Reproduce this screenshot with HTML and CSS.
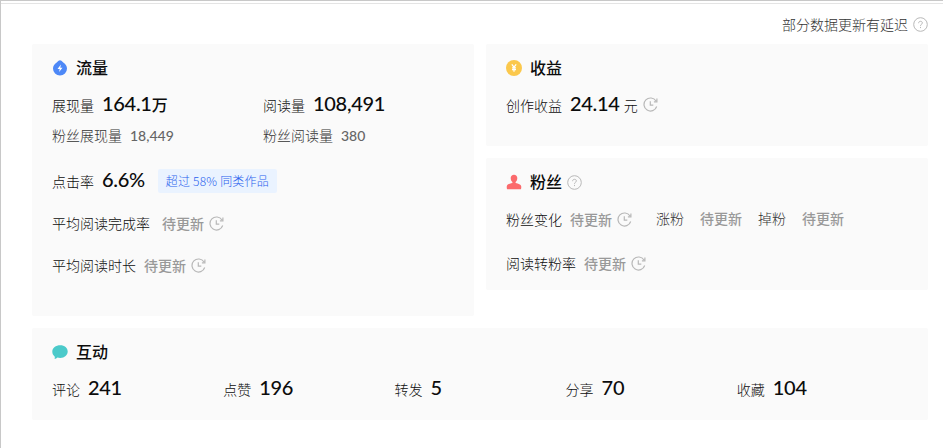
FILE: index.html
```html
<!DOCTYPE html>
<html lang="zh-CN">
<head>
  <meta charset="UTF-8">
  <meta name="viewport" content="width=device-width, initial-scale=1.0">
  <title>数据概览</title>
  <link rel="stylesheet" href="styles.css">
</head>
<body>
  <!-- Shared icons -->
  <svg class="sprite" width="0" height="0">
    <symbol id="help" viewBox="0 0 15 15">
      <circle cx="7.5" cy="7.5" r="6.8" fill="none" stroke="currentColor"/>
      <path d="M5.6 6.2C5.6 5 6.4 4.3 7.500 4.300s1.900.7 1.900 1.700C9.400 7.200 7.500 7.300 7.500 8.800M7.500 9.900v1.200" fill="none" stroke="currentColor"/>
    </symbol>
    <symbol id="clock" viewBox="0 0 15 15">
      <path d="M13 4A6.500 6.500 0 1 0 13.700 9.500M13.900 1.500v3.300h-3M7.300 4.300v3.900h3" fill="none" stroke="currentColor" stroke-width="1.2"/>
    </symbol>
  </svg>

  <div class="page">
    <div class="notice">部分数据更新有延迟<svg class="tip"><use href="#help"/></svg></div>

    <div class="cards">
      <div class="card traffic">
        <h2 class="title">
          <svg class="icon" viewBox="0 0 16 16"><path d="M8 .3C9 .3 9.700 1.200 11.300 2.400 13.600 4.100 15 6 15 8.600a7 7 0 0 1-14 0C1 6 2.400 4.100 4.700 2.400 6.300 1.200 7 .3 8 .3z" fill="#4d88f7"/><path d="M8.900 4.600 5.500 8.900h2.200l-.6 3 3.400-4.200H8.300z" fill="#fff"/></svg>
          <span>流量</span>
        </h2>
        <div class="row pair">
          <div class="item"><span>展现量</span><span class="num">164.1<i class="unit">万</i></span></div>
          <div class="item"><span>阅读量</span><span class="num">108,491</span></div>
        </div>
        <div class="row pair sub">
          <div class="item"><span>粉丝展现量</span><span class="subnum">18,449</span></div>
          <div class="item"><span>粉丝阅读量</span><span class="subnum">380</span></div>
        </div>
        <div class="row rate">
          <div class="item"><span>点击率</span><span class="num">6.6%</span></div>
          <span class="tag">超过 58% 同类作品</span>
        </div>
        <div class="row finish"><span>平均阅读完成率</span><span class="wait">待更新</span><svg class="tip"><use href="#clock"/></svg></div>
        <div class="row duration"><span>平均阅读时长</span><span class="wait">待更新</span><svg class="tip"><use href="#clock"/></svg></div>
      </div>

      <div class="side">
        <div class="card income">
          <h2 class="title">
            <svg class="icon" viewBox="0 0 16 16"><circle cx="8" cy="8" r="8" fill="#fbc84c"/><path d="M5.800 4.300 8 7.200l2.200-2.900M8 7.200v4.600M6 7.800h4M6 9.600h4" fill="none" stroke="#fff" stroke-width="1.2"/></svg>
            <span>收益</span>
          </h2>
          <div class="row money">
            <div class="item"><span>创作收益</span><span class="num">24.14</span><span class="yuan">元</span></div>
            <svg class="tip"><use href="#clock"/></svg>
          </div>
        </div>

        <div class="card fans">
          <h2 class="title">
            <svg class="icon" viewBox="0 0 16 16"><path d="M8 .8c2 0 3.300 1.400 3.300 3.300 0 1.800-.7 3.200-1.700 4v.8c2.800.6 5.300 1.400 5.600 3.300.2 1.200 0 2.500-.4 3.100H1.200c-.4-.6-.6-1.900-.4-3.100.3-1.900 2.800-2.700 5.600-3.300v-.8c-1-.8-1.700-2.200-1.700-4C4.700 2.200 6 .8 8 .8z" fill="#fb6a6c"/></svg>
            <span>粉丝</span><svg class="tip"><use href="#help"/></svg>
          </h2>
          <div class="row change">
            <span>粉丝变化</span><span class="wait">待更新</span><svg class="tip"><use href="#clock"/></svg>
            <div class="detail">
              <span>涨粉</span><span class="wait">待更新</span>
              <span>掉粉</span><span class="wait">待更新</span>
            </div>
          </div>
          <div class="row convert"><span>阅读转粉率</span><span class="wait">待更新</span><svg class="tip"><use href="#clock"/></svg></div>
        </div>
      </div>
    </div>

    <div class="card interact">
      <h2 class="title">
        <svg class="icon" viewBox="0 0 16 16"><path d="M8.200 1.200c4.400 0 7.500 2.700 7.500 6.300s-3.100 6.400-7.500 6.400c-1 0-2-.1-2.800-.4-.9.7-1.500 1.300-2.800 1.400.4-.9.3-1.800-.1-2.600C1 11.200.3 9.500.3 7.500.3 3.900 3.800 1.200 8.200 1.200z" fill="#4bcaca"/></svg>
        <span>互动</span>
      </h2>
      <div class="row stats">
        <div class="item"><span>评论</span><span class="num">241</span></div>
        <div class="item"><span>点赞</span><span class="num">196</span></div>
        <div class="item"><span>转发</span><span class="num">5</span></div>
        <div class="item"><span>分享</span><span class="num">70</span></div>
        <div class="item"><span>收藏</span><span class="num">104</span></div>
      </div>
    </div>
  </div>
</body>
</html>
```
FILE: styles.css
```css
* {
  box-sizing: border-box;
}
body {
  margin: 0;
  background-color: #fff;
  color: #0c0c0c;
  font-family: "Noto Sans CJK SC", sans-serif;
  font-size: 14px;
  font-weight: 300;
  line-height: 24px;
}
.sprite {
  display: block;
}
.page {
  height: 448px;
  padding: 2px 15px 0 31px;
  border-top: 1px solid #c8c8c8;
  border-left: 1px solid #c8c8c8;
  background: linear-gradient(#e4e4e4, #e4e4e4) 0 2px / 100% 1px no-repeat;
}
.notice {
  display: flex;
  align-items: center;
  justify-content: flex-end;
  height: 41px;
  padding-top: 1px;
  color: #333;
}
/* Small grey icons after the text */
.tip {
  flex: none;
  width: 15px;
  height: 15px;
  margin-left: 5px;
  color: #b8b8b8;
}
.cards {
  display: flex;
  justify-content: space-between;
}
.card {
  padding: 12px 20px 0;
  background-color: #fafafa;
  border-radius: 2px;
}
.traffic {
  width: 442px;
  height: 272px;
}
.side {
  width: 442px;
}
.income {
  height: 102px;
}
.fans {
  height: 132px;
  margin-top: 12px;
}
.interact {
  height: 92px;
  margin-top: 12px;
}
.title {
  display: flex;
  align-items: center;
  height: 24px;
  margin: 0;
  font-size: 16px;
  font-weight: 500;
}
.title span {
  padding-bottom: 3px;
}
.icon {
  width: 16px;
  height: 16px;
  margin-right: 8px;
}
.row {
  display: flex;
  align-items: center;
  height: 24px;
}
.item {
  display: flex;
  align-items: baseline;
}
.pair {
  display: grid;
  grid-template-columns: 211px 1fr;
  margin-top: 11px;
}
.num {
  margin-left: 8px;
  font-family: Lato, "Noto Sans CJK SC", sans-serif;
  font-size: 20px;
  font-weight: 500;
  letter-spacing: -0.3px;
}
.unit {
  font-size: 16px;
  font-style: normal;
  font-weight: 500;
}
.sub {
  margin-top: 8px;
  color: #333;
}
.subnum {
  margin-left: 8px;
  color: #666;
  font-family: Lato, sans-serif;
  font-weight: 500;
}
.rate {
  margin-top: 21px;
}
.tag {
  height: 24px;
  margin: 2px 0 0 13px;
  padding: 0 8px;
  border-radius: 2px;
  background-color: #eaf3ff;
  color: #2a62ee;
  font-size: 12px;
  letter-spacing: 0.2px;
}
.wait {
  margin-left: 8px;
  color: #999;
  font-weight: 500;
}
.finish {
  margin-top: 19px;
}
.finish .wait {
  margin-left: 12px;
}
.duration {
  margin-top: 18px;
}
.money {
  margin-top: 12px;
}
.yuan {
  margin-left: 4px;
}
.change {
  margin-top: 13px;
}
.detail {
  display: flex;
  height: 26px;
  margin-left: 24px;
  color: #333;
}
.detail .wait {
  margin: 0 16px;
}
.convert {
  margin-top: 20px;
}
.stats {
  display: grid;
  grid-template-columns: repeat(5, 1fr);
  margin-top: 11px;
}
```
